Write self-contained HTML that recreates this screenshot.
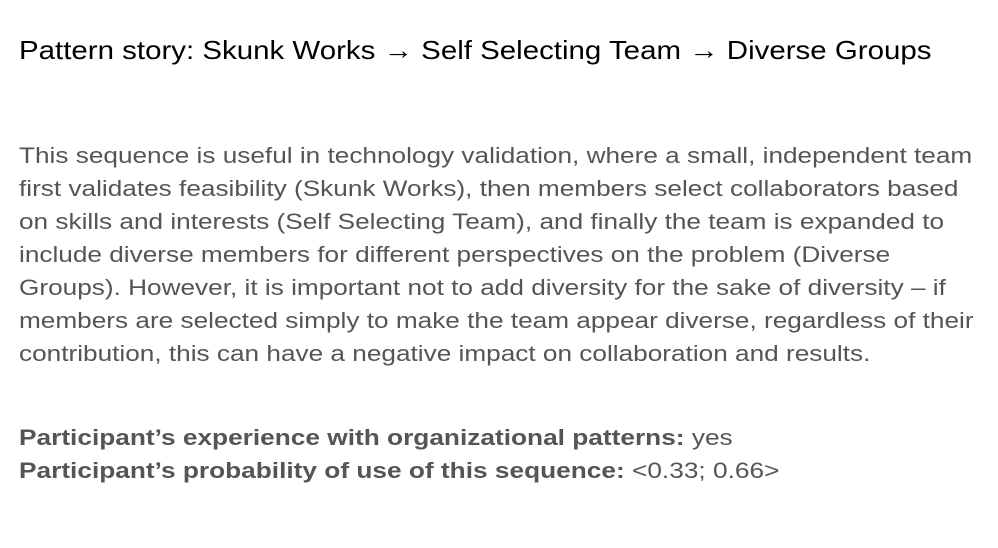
<!DOCTYPE html>
<html><head><meta charset="utf-8"><style>
html,body{margin:0;padding:0;background:#fff;width:998px;height:548px;overflow:hidden}
body{font-family:"Liberation Sans",Arial,sans-serif}
h1{position:absolute;left:19px;top:34px;margin:0;font-weight:normal;font-size:26px;line-height:32px;color:#000;white-space:nowrap;transform:scaleX(1.133);transform-origin:0 0}
p{position:absolute;left:19px;margin:0;font-size:22px;line-height:33px;color:#555;white-space:nowrap;transform-origin:0 0}
#a{top:139px;transform:scaleX(1.19)}
#b{top:421px;transform:scaleX(1.193)}
b{color:#555}
</style></head><body>
<h1>Pattern story: Skunk Works → Self Selecting Team → Diverse Groups</h1>
<p id="a">This sequence is useful in technology validation, where a small, independent team<br>first validates feasibility (Skunk Works), then members select collaborators based<br>on skills and interests (Self Selecting Team), and finally the team is expanded to<br>include diverse members for different perspectives on the problem (Diverse<br>Groups). However, it is important not to add diversity for the sake of diversity – if<br>members are selected simply to make the team appear diverse, regardless of their<br>contribution, this can have a negative impact on collaboration and results.</p>
<p id="b"><b>Participant’s experience with organizational patterns:</b> yes<br><b>Participant’s probability of use of this sequence:</b> &lt;0.33; 0.66&gt;</p>
</body></html>
